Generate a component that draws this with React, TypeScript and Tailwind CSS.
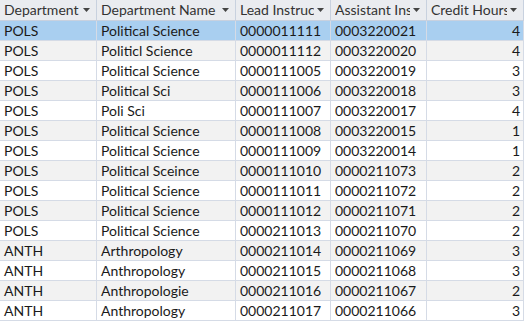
import React from "react";

// Access-style datasheet of course records

type Row = [string, string, string, string, number];

const rows: Row[] = [
  ["POLS", "Political Science", "0000011111", "0003220021", 4],
  ["POLS", "Politicl Science", "0000011112", "0003220020", 4],
  ["POLS", "Political Science", "0000111005", "0003220019", 3],
  ["POLS", "Political Sci", "0000111006", "0003220018", 3],
  ["POLS", "Poli Sci", "0000111007", "0003220017", 4],
  ["POLS", "Political Science", "0000111008", "0003220015", 1],
  ["POLS", "Political Science", "0000111009", "0003220014", 1],
  ["POLS", "Political Sceince", "0000111010", "0000211073", 2],
  ["POLS", "Political Science", "0000111011", "0000211072", 2],
  ["POLS", "Political Science", "0000111012", "0000211071", 2],
  ["POLS", "Political Science", "0000211013", "0000211070", 2],
  ["ANTH", "Arthropology", "0000211014", "0000211069", 3],
  ["ANTH", "Anthropology", "0000211015", "0000211068", 3],
  ["ANTH", "Anthropologie", "0000211016", "0000211067", 2],
  ["ANTH", "Anthropology", "0000211017", "0000211066", 3],
];

const headers = ["Department", "Department Name", "Lead Instructor", "Assistant Instructor", "Credit Hours"];

function Arrow() {
  return (
    <svg width="7" height="4" viewBox="0 0 7 4" className="shrink-0">
      <path d="M0 0h7L3.5 4z" fill="#444" />
    </svg>
  );
}

export default function App() {
  return (
    <div
      className="w-[524px] h-[321px] overflow-hidden bg-white text-[14px] text-[#1a1a1a]"
      style={{ fontFamily: "Lato, 'Open Sans', sans-serif" }}
    >
      <div className="grid grid-cols-[97px_139px_95px_96px_97px]">
        {headers.map((h) => (
          <div
            key={h}
            className="h-[21px] flex items-center gap-[3px] pl-[4px] pr-[6px] bg-[#eaecf0] border-r border-b border-[#c8d1df] text-[#333]"
          >
            <span className="flex-1 overflow-hidden whitespace-nowrap leading-[20px]">{h}</span>
            <Arrow />
          </div>
        ))}
        {rows.map((r, i) => {
          const bg = i === 0 ? "bg-[#a9cff0]" : i % 2 === 1 ? "bg-[#f2f2f2]" : "bg-white";
          return (
            <React.Fragment key={i}>
              {r.map((c, j) => (
                <div
                  key={j}
                  className={`h-[20px] leading-[19px] whitespace-nowrap overflow-hidden border-r border-b border-[#d5dbe6] ${bg} ${
                    j === 4 ? "text-right pr-[3px]" : "pl-[4px]"
                  }`}
                >
                  {c}
                </div>
              ))}
            </React.Fragment>
          );
        })}
      </div>
    </div>
  );
}
